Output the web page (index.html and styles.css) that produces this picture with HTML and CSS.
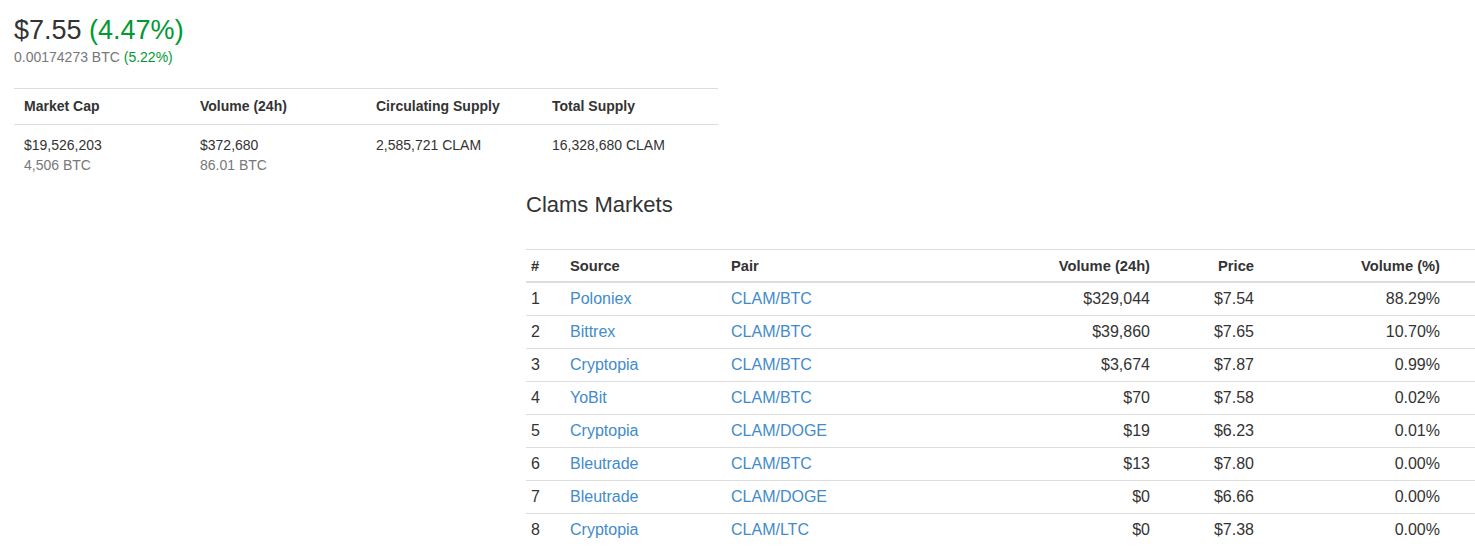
FILE: index.html
```html
<!DOCTYPE html>
<html lang="en">
<head>
<meta charset="utf-8">
<title>Clams</title>
<link rel="stylesheet" href="styles.css">
</head>
<body>
<div class="page">
  <div class="price-block">
    <div class="price-main">$7.55 <span class="up">(4.47%)</span></div>
    <div class="price-btc">0.00174273 BTC <span class="up">(5.22%)</span></div>
  </div>

  <table class="summary">
    <thead>
      <tr>
        <th>Market Cap</th>
        <th>Volume (24h)</th>
        <th>Circulating Supply</th>
        <th>Total Supply</th>
      </tr>
    </thead>
    <tbody>
      <tr>
        <td>$19,526,203<br><span class="muted">4,506 BTC</span></td>
        <td>$372,680<br><span class="muted">86.01 BTC</span></td>
        <td>2,585,721 CLAM</td>
        <td>16,328,680 CLAM</td>
      </tr>
    </tbody>
  </table>

  <section class="markets">
    <h2 class="markets-title">Clams Markets</h2>
    <table class="markets-table">
      <colgroup>
        <col class="c-num"><col class="c-src"><col class="c-pair"><col class="c-vol"><col class="c-price"><col class="c-pct">
      </colgroup>
      <thead>
        <tr>
          <th>#</th>
          <th>Source</th>
          <th>Pair</th>
          <th class="r">Volume (24h)</th>
          <th class="r">Price</th>
          <th class="r last">Volume (%)</th>
        </tr>
      </thead>
      <tbody>
        <tr><td>1</td><td><a href="#">Poloniex</a></td><td><a href="#">CLAM/BTC</a></td><td class="r">$329,044</td><td class="r">$7.54</td><td class="r last">88.29%</td></tr>
        <tr><td>2</td><td><a href="#">Bittrex</a></td><td><a href="#">CLAM/BTC</a></td><td class="r">$39,860</td><td class="r">$7.65</td><td class="r last">10.70%</td></tr>
        <tr><td>3</td><td><a href="#">Cryptopia</a></td><td><a href="#">CLAM/BTC</a></td><td class="r">$3,674</td><td class="r">$7.87</td><td class="r last">0.99%</td></tr>
        <tr><td>4</td><td><a href="#">YoBit</a></td><td><a href="#">CLAM/BTC</a></td><td class="r">$70</td><td class="r">$7.58</td><td class="r last">0.02%</td></tr>
        <tr><td>5</td><td><a href="#">Cryptopia</a></td><td><a href="#">CLAM/DOGE</a></td><td class="r">$19</td><td class="r">$6.23</td><td class="r last">0.01%</td></tr>
        <tr><td>6</td><td><a href="#">Bleutrade</a></td><td><a href="#">CLAM/BTC</a></td><td class="r">$13</td><td class="r">$7.80</td><td class="r last">0.00%</td></tr>
        <tr><td>7</td><td><a href="#">Bleutrade</a></td><td><a href="#">CLAM/DOGE</a></td><td class="r">$0</td><td class="r">$6.66</td><td class="r last">0.00%</td></tr>
        <tr><td>8</td><td><a href="#">Cryptopia</a></td><td><a href="#">CLAM/LTC</a></td><td class="r">$0</td><td class="r">$7.38</td><td class="r last">0.00%</td></tr>
      </tbody>
    </table>
  </section>
</div>
</body>
</html>
```

FILE: styles.css
```css
html, body {
  margin: 0;
  padding: 0;
  background: #fff;
}
body {
  font-family: "Liberation Sans", Arial, Helvetica, sans-serif;
  color: #333;
  font-size: 14px;
  line-height: 20px;
  overflow: hidden;
}
.page {
  padding-left: 14px;
}
.price-block {
  padding-top: 14px;
}
.price-main {
  font-size: 27px;
  line-height: 32px;
  color: #333;
}
.up {
  color: #093;
}
.price-btc {
  margin-top: 1px;
  font-size: 14px;
  line-height: 20px;
  color: #777;
}
.summary {
  margin-top: 21px;
  width: 704px;
  border-collapse: collapse;
  table-layout: fixed;
}
.summary th {
  text-align: left;
  font-weight: bold;
  font-size: 14px;
  line-height: 20px;
  padding: 7px 10px 8px;
  border-top: 1px solid #ddd;
  border-bottom: 1px solid #ddd;
}
.summary td {
  vertical-align: top;
  font-size: 14px;
  line-height: 20px;
  padding: 10px 10px 7px;
}
.muted {
  color: #777;
}
.markets {
  margin-left: 512px;
}
.markets-title {
  margin: 11px 0 0 0;
  font-size: 22px;
  line-height: 24px;
  font-weight: normal;
  color: #333;
}
.markets-table {
  margin-top: 32px;
  width: 949px;
  border-collapse: collapse;
  table-layout: fixed;
}
.c-num { width: 39px; }
.c-src { width: 161px; }
.c-pair { width: 260px; }
.c-vol { width: 169px; }
.c-price { width: 104px; }
.c-pct { width: 216px; }
.markets-table th {
  text-align: left;
  font-weight: bold;
  font-size: 14.7px;
  line-height: 20px;
  padding: 6px 5px 5px;
  border-top: 1px solid #ddd;
  border-bottom: 2px solid #ddd;
  white-space: nowrap;
}
.markets-table td {
  font-size: 16px;
  line-height: 20px;
  padding: 6px 5px;
  border-bottom: 1px solid #ddd;
  white-space: nowrap;
}
.markets-table tbody tr:last-child td {
  border-bottom: 0;
}
.markets-table .r {
  text-align: right;
}
.markets-table .last {
  padding-right: 35px;
}
.markets-table a {
  color: #428bca;
  text-decoration: none;
}
```
